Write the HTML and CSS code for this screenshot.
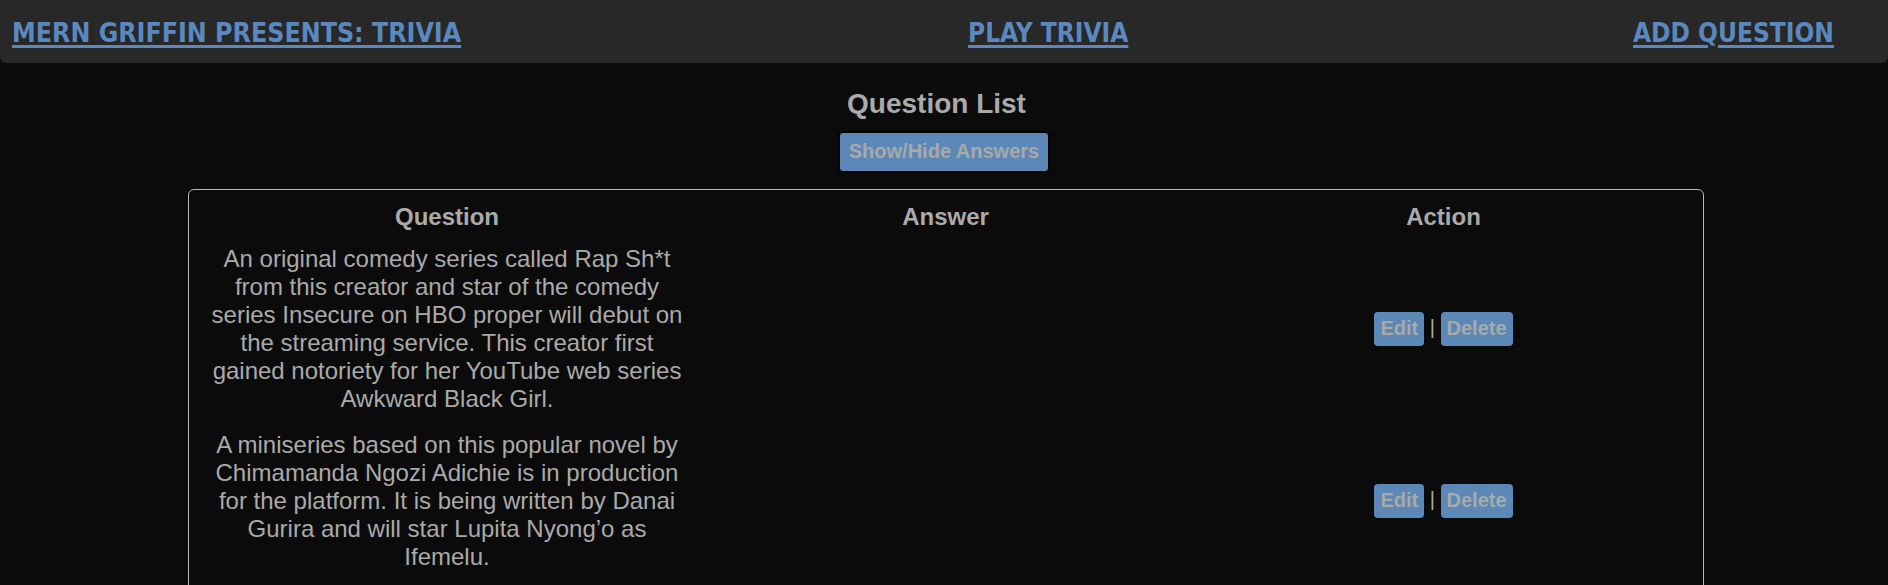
FILE: index.html
```html
<!DOCTYPE html>
<html lang="en">
<head>
<meta charset="utf-8">
<title>Mern Griffin Presents: Trivia</title>
<link rel="stylesheet" href="styles.css">
</head>
<body>
<nav class="nav">
  <a class="nav-link nav-title" href="#">MERN GRIFFIN PRESENTS: TRIVIA</a>
  <a class="nav-link nav-play" href="#">PLAY TRIVIA</a>
  <a class="nav-link nav-add" href="#">ADD QUESTION</a>
</nav>
<main class="main">
  <h2 class="page-title">Question List</h2>
  <button class="toggle-btn" type="button">Show/Hide Answers</button>
  <section class="list-box">
    <table class="q-table">
      <colgroup>
        <col class="col-q">
        <col class="col-a">
        <col class="col-act">
      </colgroup>
      <thead>
        <tr>
          <th>Question</th>
          <th>Answer</th>
          <th>Action</th>
        </tr>
      </thead>
      <tbody>
        <tr>
          <td class="q-text">An original comedy series called Rap Sh*t from this creator and star of the comedy series Insecure on HBO proper will debut on the streaming service. This creator first gained notoriety for her YouTube web series Awkward Black Girl.</td>
          <td></td>
          <td class="actions"><button class="act-btn" type="button">Edit</button> <span class="sep">|</span> <button class="act-btn" type="button">Delete</button></td>
        </tr>
        <tr>
          <td class="q-text">A miniseries based on this popular novel by Chimamanda Ngozi Adichie is in production for the platform. It is being written by Danai Gurira and will star Lupita Nyong’o as Ifemelu.</td>
          <td></td>
          <td class="actions"><button class="act-btn" type="button">Edit</button> <span class="sep">|</span> <button class="act-btn" type="button">Delete</button></td>
        </tr>
      </tbody>
    </table>
  </section>
</main>
</body>
</html>
```

FILE: styles.css
```css
html, body {
  margin: 0;
  padding: 0;
}

body {
  background: #0b0b0b;
  color: #aaaaaa;
  font-family: "Liberation Sans", Arial, sans-serif;
}

.nav {
  display: grid;
  grid-template-columns: 956px 665px auto;
  align-items: start;
  height: 63px;
  box-sizing: border-box;
  padding: 19px 0 0 12px;
  background: #282828;
  border-radius: 0 0 6px 6px;
}

.nav-link {
  justify-self: start;
  font-family: "DejaVu Sans Condensed", "DejaVu Sans", sans-serif;
  font-weight: bold;
  font-size: 26px;
  line-height: 28px;
  color: #5a88bf;
  text-decoration: underline;
  text-decoration-thickness: 3px;
  text-underline-offset: 3px;
}

.nav-title {
  font-size: 26.5px;
}

.main {
  display: flex;
  flex-direction: column;
  align-items: center;
}

.page-title {
  margin: 25px 15px 0 0;
  font-size: 28px;
  line-height: 32px;
  font-weight: bold;
  color: #aaaaaa;
}

.toggle-btn {
  margin-top: 11px;
  padding: 7px 9px 8px;
  font-family: "Liberation Sans", Arial, sans-serif;
  font-size: 20px;
  line-height: 23px;
  font-weight: bold;
  color: #a9a9a9;
  background: #5b88b6;
  border: 2px solid #000;
  border-radius: 5px;
}

.list-box {
  align-self: flex-start;
  margin: 16px 0 0 188px;
  width: 1516px;
  box-sizing: border-box;
  border: 1px solid #b8b8b8;
  border-radius: 6px;
  min-height: 420px;
}

.q-table {
  table-layout: fixed;
  width: 1512px;
  border-collapse: collapse;
}

.col-q { width: 516px; }
.col-a { width: 481px; }
.col-act { width: 515px; }

.q-table th {
  padding: 13px 15px 4px;
  font-size: 24px;
  line-height: 28px;
  font-weight: bold;
  text-align: center;
  color: #aaaaaa;
}

.q-table td {
  padding: 10px 15px 8px;
  font-size: 24px;
  line-height: 28px;
  text-align: center;
  vertical-align: middle;
  color: #aaaaaa;
}

.q-table td.actions {
  font-size: 20px;
}

.sep {
  color: #aaaaaa;
}

.act-btn {
  padding: 5px 6px 6px;
  font-family: "Liberation Sans", Arial, sans-serif;
  font-size: 20px;
  line-height: 23px;
  font-weight: bold;
  color: #a9a9a9;
  background: #5b88b6;
  border: 0;
  border-radius: 4px;
  vertical-align: middle;
}
```
